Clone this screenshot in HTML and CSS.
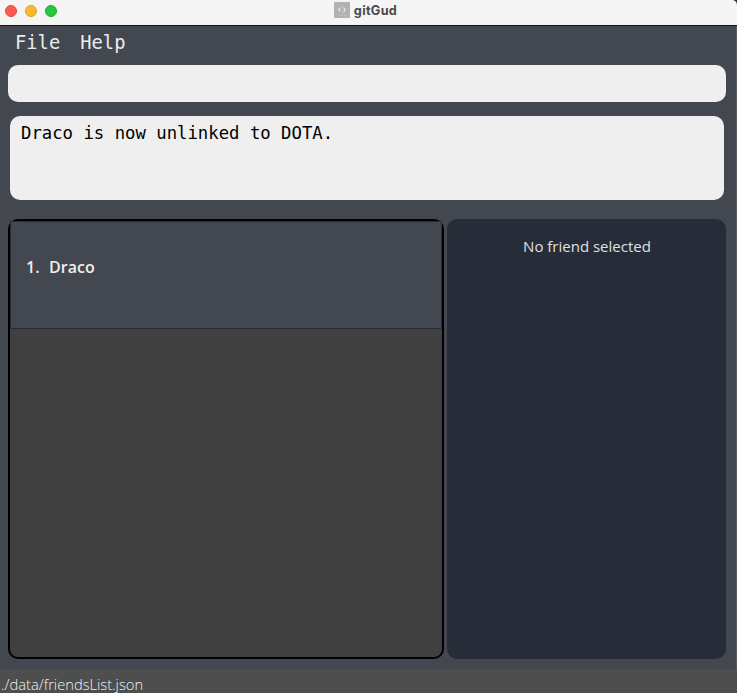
FILE: index.html
```html
<!DOCTYPE html>
<html lang="en">
<head>
<meta charset="utf-8">
<title>gitGud</title>
<link rel="stylesheet" href="styles.css">
</head>
<body>
<div class="window">
  <header class="titlebar">
    <div class="lights"><i class="light close"></i><i class="light minimize"></i><i class="light zoom"></i></div>
    <div class="title">
      <svg class="app-icon" viewBox="0 0 16 16" aria-hidden="true"><rect width="16" height="16" fill="#b1b2b4"/><path d="M5.2 7.8C4.8 3.5 11.2 3.5 10.8 7.8M10.8 8.5Q10.5 10.5 8 10.5" fill="none" stroke="#cbccce" stroke-width=".9"/><path d="M5.5 6.3v2.9M10.5 6.3v2.9" stroke="#e8e9ea" stroke-width="1.5"/><path d="M4.5 13.5h7" stroke="#bcbdbf" stroke-width=".8"/></svg>
      <span class="title-text">gitGud</span>
    </div>
  </header>
  <nav class="menu"><span class="menu-item">File</span><span class="menu-item">Help</span></nav>
  <div class="command"></div>
  <div class="result"><span class="result-text">Draco is now unlinked to DOTA.</span></div>
  <main class="content">
    <section class="list">
      <div class="friend"><span class="index">1.</span><span class="name">Draco</span></div>
    </section>
    <section class="details"><span class="empty">No friend selected</span></section>
  </main>
  <footer class="status"><span class="path">./data/friendsList.json</span></footer>
</div>
</body>
</html>
```

FILE: styles.css
```css
* { box-sizing: border-box; }
body { margin: 0; overflow: hidden; background: #3c2b30; font-family: "Open Sans", "Noto Sans", sans-serif; }
.window {
  height: 693px;
  display: flex;
  flex-direction: column;
  background: #434750;
  border-radius: 0 5px 0 0;
  overflow: hidden;
  box-shadow: inset -1px 0 #595c64;
}
.titlebar {
  flex: none;
  height: 26px;
  display: grid;
  grid-template-columns: 1fr auto 1fr;
  background: #f5f5f5;
  border-bottom: 1px solid #0e141f;
}
.lights { display: flex; gap: 8px; padding: 5px 0 0 5px; }
.light { width: 12px; height: 12px; border-radius: 50%; }
.close { background: #ff5b54; border: 1px solid #e0443e; }
.minimize { background: #fdb92c; border: 1px solid #dfa023; }
.zoom { background: #27c840; border: 1px solid #1dad2b; }
.title { display: flex; gap: 4px; padding-top: 2px; margin-right: 9px; }
.app-icon { width: 16px; height: 16px; margin-left: 3px; }
.title-text { font: 700 12.7px/18px Inter, "Liberation Sans", sans-serif; letter-spacing: .3px; color: #4b4b4b; }
.menu {
  flex: none;
  height: 39px;
  display: flex;
  gap: 20px;
  padding: 5px 15px 0;
  font: 18.8px/24px "DejaVu Sans Mono", monospace;
  color: #ececed;
}
.command { flex: none; height: 37px; margin: 0 11px 0 8px; border-radius: 10px; background: #efefef; }
.result {
  flex: none;
  height: 84px;
  margin: 14px 13px 0 10px;
  padding: 6px 11px;
  border-radius: 10px;
  background: #efefef;
  font: 17.3px/22px "DejaVu Sans Mono", monospace;
  color: #000;
}
.content {
  flex: none;
  height: 440px;
  margin: 19px 11px 0 8px;
  display: grid;
  grid-template-columns: 436px 279px;
  gap: 3px;
}
.list { padding: 2px; border-radius: 10px; background: linear-gradient(#404040, #404040) content-box, #000; }
.friend {
  height: 108px;
  display: flex;
  gap: 9.5px;
  padding: 34px 15px 0;
  border: 1px solid #272c38;
  background: #434750;
  font-weight: 600;
  font-size: 16px;
  line-height: 22px;
  color: #efeff0;
}
.details { border-radius: 10px; background: #272d38; padding: 16px 0 0 1px; text-align: center; font-size: 15px; line-height: 22px; color: #dfe0e2; }
.status { flex: 1; margin-top: 11px; padding: 4px 1px 0; background: #4e4e4e; font-size: 14.7px; line-height: 20px; font-weight: 300; color: #f2f2f2; white-space: nowrap; }
.path { display: block; }
```
